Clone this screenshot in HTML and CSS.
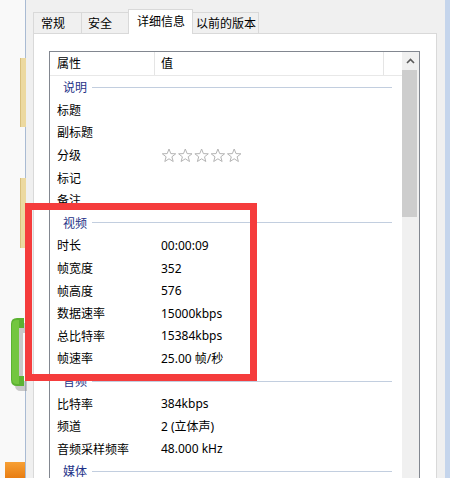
FILE: index.html
```html
<!DOCTYPE html>
<html lang="zh-CN">
<head>
  <meta charset="UTF-8" />
  <title>属性 - 详细信息</title>
  <link rel="stylesheet" href="styles.css">
</head>
<body>

  <div class="desk">
    <div class="folder folder-one"></div>
    <div class="folder folder-two"></div>
    <svg class="green-icon" width="20" height="74" viewBox="0 0 20 74">
      <path d="M6 8 Q6 2 12 2 L18 2 L18 12 L14 12 L14 60 L18 60 L18 70 L12 70 Q6 70 6 64 Z" fill="#8c8c8c" opacity="0.45" transform="translate(2 3)"/>
      <path d="M4 6 Q4 0 10 0 L17 0 L17 10 L12 10 L12 58 L17 58 L17 68 L10 68 Q4 68 4 62 Z" fill="#5cb232"/>
      <path d="M5 7 Q5 2 10 2 L12 2 L12 66 L10 66 Q5 66 5 61 Z" fill="#73c640"/>
    </svg>
    <div class="orange-icon"></div>
  </div>

  <div class="window">
    <div class="tabs">
      <div class="tab tab-general">常规</div>
      <div class="tab tab-security">安全</div>
      <div class="tab tab-details active">详细信息</div>
      <div class="tab tab-versions">以前的版本</div>
    </div>

    <div class="panel">
      <div class="listview">
        <div class="rows">
          <div class="header">
            <div class="col-name">属性</div>
            <div class="col-value">值</div>
            <div class="col-rest"></div>
          </div>

          <div class="group"><span>说明</span><i></i></div>
          <div class="row"><div class="name">标题</div><div class="value"></div></div>
          <div class="row"><div class="name">副标题</div><div class="value"></div></div>
          <div class="row">
            <div class="name">分级</div>
            <div class="value stars">
              <svg width="82" height="15" viewBox="0 0 82 15">
                <g fill="none" stroke="#b4b4b4" stroke-width="1">
                  <polygon points="7,1 8.8,5.6 13.7,5.8 9.9,8.8 11.2,13.5 7,10.8 2.8,13.5 4.1,8.8 0.3,5.8 5.2,5.6"/>
                  <polygon transform="translate(16.3 0)" points="7,1 8.8,5.6 13.7,5.8 9.9,8.8 11.2,13.5 7,10.8 2.8,13.5 4.1,8.8 0.3,5.8 5.2,5.6"/>
                  <polygon transform="translate(32.6 0)" points="7,1 8.8,5.6 13.7,5.8 9.9,8.8 11.2,13.5 7,10.8 2.8,13.5 4.1,8.8 0.3,5.8 5.2,5.6"/>
                  <polygon transform="translate(48.9 0)" points="7,1 8.8,5.6 13.7,5.8 9.9,8.8 11.2,13.5 7,10.8 2.8,13.5 4.1,8.8 0.3,5.8 5.2,5.6"/>
                  <polygon transform="translate(65.2 0)" points="7,1 8.8,5.6 13.7,5.8 9.9,8.8 11.2,13.5 7,10.8 2.8,13.5 4.1,8.8 0.3,5.8 5.2,5.6"/>
                </g>
              </svg>
            </div>
          </div>
          <div class="row"><div class="name">标记</div><div class="value"></div></div>
          <div class="row"><div class="name">备注</div><div class="value"></div></div>

          <div class="group"><span>视频</span><i></i></div>
          <div class="row"><div class="name">时长</div><div class="value">00:00:09</div></div>
          <div class="row"><div class="name">帧宽度</div><div class="value">352</div></div>
          <div class="row"><div class="name">帧高度</div><div class="value">576</div></div>
          <div class="row"><div class="name">数据速率</div><div class="value">15000kbps</div></div>
          <div class="row"><div class="name">总比特率</div><div class="value">15384kbps</div></div>
          <div class="row"><div class="name">帧速率</div><div class="value">25.00 帧/秒</div></div>

          <div class="group"><span>音频</span><i></i></div>
          <div class="row"><div class="name">比特率</div><div class="value">384kbps</div></div>
          <div class="row"><div class="name">频道</div><div class="value">2 (立体声)</div></div>
          <div class="row"><div class="name">音频采样频率</div><div class="value">48.000 kHz</div></div>

          <div class="group"><span>媒体</span><i></i></div>
        </div>

        <div class="scrollbar">
          <div class="arrow">
            <svg width="9" height="6" viewBox="0 0 9 6">
              <polyline points="1,5 4.5,1.5 8,5" fill="none" stroke="#5a5a5a" stroke-width="1.6"/>
            </svg>
          </div>
          <div class="thumb"></div>
        </div>
      </div>
    </div>
  </div>

  <!-- red annotation box -->
  <div class="mark"></div>

</body>
</html>
```

FILE: styles.css
```css
body {
  margin: 0;
  width: 450px;
  height: 478px;
  overflow: hidden;
  display: flex;
  position: relative;
  background: #f9f9f9;
  font-family: "Noto Sans", "Noto Sans CJK SC", sans-serif;
  font-size: 12px;
  color: #000;
}

/* desktop strip on the left */
.desk {
  width: 25px;
  flex: none;
  position: relative;
}

.folder {
  position: absolute;
  left: 20px;
  width: 5px;
  background: #ecd9a0;
  border-left: 1px solid #d9c07c;
}

.folder-one {
  top: 58px;
  height: 69px;
}

.folder-two {
  top: 178px;
  height: 70px;
}

.green-icon {
  position: absolute;
  left: 7px;
  top: 318px;
}

.orange-icon {
  position: absolute;
  left: 5px;
  top: 462px;
  width: 20px;
  height: 16px;
  background: linear-gradient(#f7a035, #e87d12);
}

/* window */
.window {
  flex: 1;
  display: flex;
  flex-direction: column;
  background: #f0f0f0;
  border-left: 1px solid #a9bbd3;
  border-right: 5px solid #c5d5ec;
  padding: 9px 8px 0 7px;
}

.tabs {
  display: flex;
  align-items: flex-end;
  height: 25px;
  flex: none;
}

.tab {
  height: 22px;
  box-sizing: border-box;
  border: 1px solid #d9d9d9;
  border-bottom: none;
  border-left: none;
  background: #f0f0f0;
  line-height: 22px;
  padding-left: 7px;
  white-space: nowrap;
}

.tab-general {
  width: 49px;
  border-left: 1px solid #d9d9d9;
  padding-left: 7px;
}

.tab-security {
  width: 47px;
  padding-left: 6px;
}

.tab-details {
  width: 65px;
}

.tab-versions {
  width: 66px;
  padding-left: 3px;
}

.tab.active {
  height: 25px;
  line-height: 24px;
  background: #fff;
  border-left: 1px solid #d9d9d9;
  margin-left: -1px;
  padding-left: 8px;
  position: relative;
  z-index: 1;
}

.panel {
  flex: 1;
  min-height: 0;
  display: flex;
  margin-top: -1px;
  background: #fff;
  border: 1px solid #d9d9d9;
  border-bottom: none;
  padding: 17px 16px 0 15px;
}

.listview {
  flex: 1;
  display: flex;
  border: 1px solid #828790;
  border-bottom: none;
}

.rows {
  flex: 1;
  overflow: hidden;
}

.header {
  display: flex;
  height: 24px;
  box-sizing: border-box;
  border-bottom: 1px solid #e8e8e8;
  line-height: 24px;
}

.col-name {
  width: 97px;
  padding-left: 7px;
  border-right: 1px solid #e5e5e5;
}

.col-value {
  width: 222px;
  padding-left: 6px;
  border-right: 1px solid #e5e5e5;
}

.col-rest {
  flex: 1;
}

.row {
  display: flex;
  align-items: center;
  height: 22.6px;
}

.name {
  width: 104px;
  padding-left: 7px;
  flex: none;
}

.value {
  white-space: nowrap;
}

.stars {
  display: flex;
  padding-left: 1px;
}

.group {
  display: flex;
  align-items: center;
  height: 22.6px;
  padding: 0 10px 0 13px;
  color: #1e3287;
}

.group i {
  flex: 1;
  height: 1px;
  margin-left: 5px;
  background: #c2cedf;
}

.scrollbar {
  width: 17px;
  flex: none;
  background: #f0f0f0;
  display: flex;
  flex-direction: column;
}

.arrow {
  height: 18px;
  display: flex;
  justify-content: center;
  align-items: center;
}

.thumb {
  height: 147px;
  margin: 0 2px 0 0;
  background: #cdcdcd;
}

/* red annotation */
.mark {
  position: absolute;
  left: 25px;
  top: 203px;
  width: 232px;
  height: 178px;
  box-sizing: border-box;
  border: 7px solid #f53c3c;
}
```
